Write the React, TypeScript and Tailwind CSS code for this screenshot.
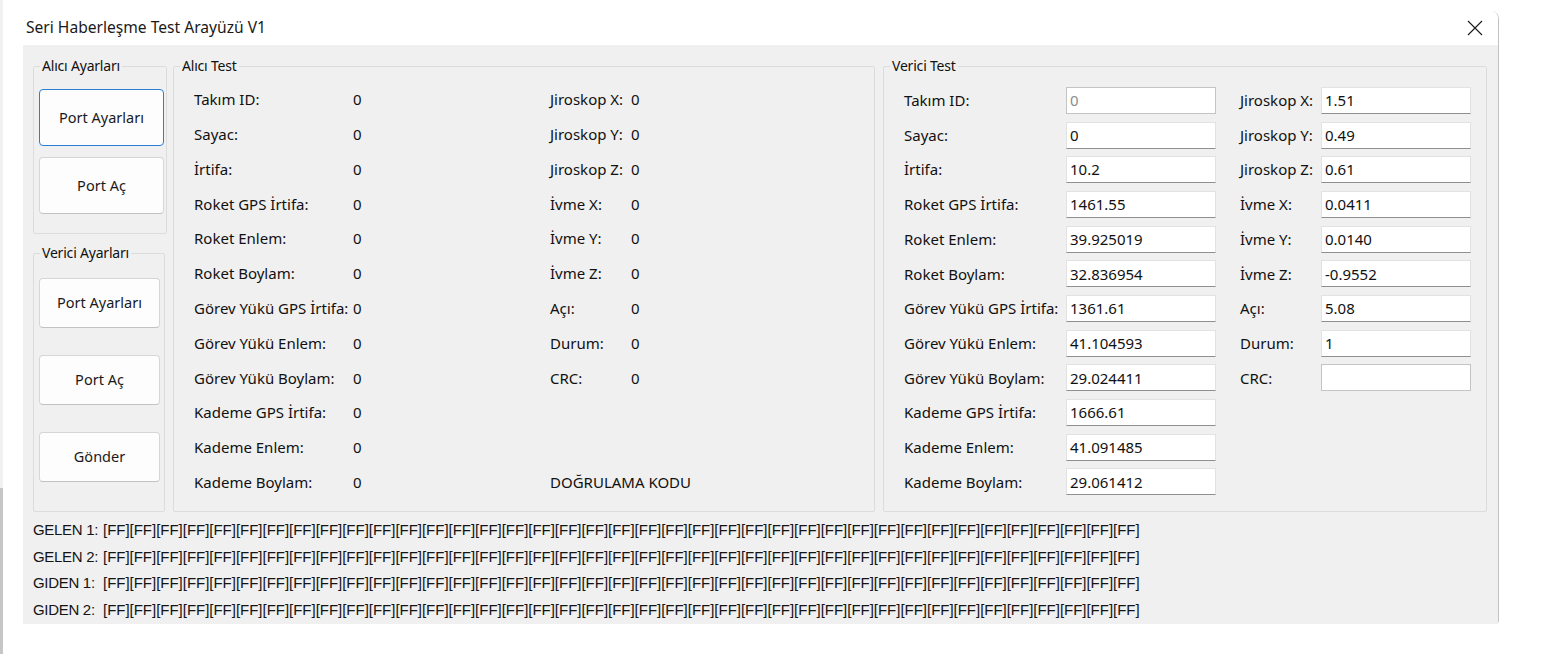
import type { ReactNode } from "react";

const ui = "font-['Noto_Sans','Liberation_Sans',sans-serif]";

const aliciLeft: [string, string][] = [
  ["Takım ID:", "0"],
  ["Sayac:", "0"],
  ["İrtifa:", "0"],
  ["Roket GPS İrtifa:", "0"],
  ["Roket Enlem:", "0"],
  ["Roket Boylam:", "0"],
  ["Görev Yükü GPS İrtifa:", "0"],
  ["Görev Yükü Enlem:", "0"],
  ["Görev Yükü Boylam:", "0"],
  ["Kademe GPS İrtifa:", "0"],
  ["Kademe Enlem:", "0"],
  ["Kademe Boylam:", "0"],
];

const aliciRight: [string, string][] = [
  ["Jiroskop X:", "0"],
  ["Jiroskop Y:", "0"],
  ["Jiroskop Z:", "0"],
  ["İvme X:", "0"],
  ["İvme Y:", "0"],
  ["İvme Z:", "0"],
  ["Açı:", "0"],
  ["Durum:", "0"],
  ["CRC:", "0"],
];

const vericiLeft: [string, string][] = [
  ["Takım ID:", "0"],
  ["Sayac:", "0"],
  ["İrtifa:", "10.2"],
  ["Roket GPS İrtifa:", "1461.55"],
  ["Roket Enlem:", "39.925019"],
  ["Roket Boylam:", "32.836954"],
  ["Görev Yükü GPS İrtifa:", "1361.61"],
  ["Görev Yükü Enlem:", "41.104593"],
  ["Görev Yükü Boylam:", "29.024411"],
  ["Kademe GPS İrtifa:", "1666.61"],
  ["Kademe Enlem:", "41.091485"],
  ["Kademe Boylam:", "29.061412"],
];

const vericiRight: [string, string][] = [
  ["Jiroskop X:", "1.51"],
  ["Jiroskop Y:", "0.49"],
  ["Jiroskop Z:", "0.61"],
  ["İvme X:", "0.0411"],
  ["İvme Y:", "0.0140"],
  ["İvme Z:", "-0.9552"],
  ["Açı:", "5.08"],
  ["Durum:", "1"],
  ["CRC:", ""],
];

const lines = ["GELEN 1:", "GELEN 2:", "GIDEN 1:", "GIDEN 2:"];
const packet = "[FF]".repeat(39);

function Group({
  title,
  className,
  children,
}: {
  title: string;
  className: string;
  children: ReactNode;
}) {
  return (
    <fieldset className={`border border-[#dcdcdc] rounded-[2px] ${className}`}>
      <legend className="ml-[6px] px-[2px] text-[14px] leading-[20px] tracking-[-0.2px] text-[#111]">
        {title}
      </legend>
      {children}
    </fieldset>
  );
}

function Button({
  label,
  focused,
  className,
}: {
  label: string;
  focused?: boolean;
  className: string;
}) {
  return (
    <button
      className={`flex items-center justify-center rounded-[4px] border bg-[#fdfdfd] text-[14.5px] text-[#1a1a1a] ${
        focused
          ? "border-[#2a7fd4]"
          : "border-[#d6d6d6] border-b-[#c2c2c2]"
      } ${className}`}
    >
      {label}
    </button>
  );
}

function Box({ value, disabled }: { value: string; disabled?: boolean }) {
  return (
    <div
      className={`h-[27px] w-[150px] bg-white px-[3px] flex items-center text-[15px] ${
        disabled
          ? "border border-[#c4c4c4] text-[#8c8c8c]"
          : "border border-[#e2e2e2] border-b-[#8f8f8f] text-[#111]"
      }`}
    >
      {value}
    </div>
  );
}

export default function App() {
  return (
    <div className={`flex w-[1548px] h-[654px] bg-white overflow-hidden ${ui}`}>
      <div className="flex flex-col w-[3px] h-full">
        <div className="h-[488px] bg-[#f1f1f1]" />
        <div className="flex-1 bg-[#c6c6c6]" />
      </div>

      <div className="ml-[20px] mt-[11px] w-[1476px] h-[613px] flex flex-col border-r border-[#c2c2c2] rounded-tr-[8px] rounded-br-[4px] overflow-hidden">
        {/* title bar */}
        <div className="h-[34px] bg-white flex items-center justify-between pl-[3px] pr-[15px]">
          <span className="text-[15.6px] text-[#1a1a1a]">
            Seri Haberleşme Test Arayüzü V1
          </span>
          <svg width="16" height="16" viewBox="0 0 16 16">
            <path d="M1 1L15 15M15 1L1 15" stroke="#1a1a1a" strokeWidth="1.1" />
          </svg>
        </div>

        {/* body */}
        <div className="flex-1 bg-[#f0f0f0] pt-[11px] pl-[10px] flex flex-col">
          <div className="flex">
            <div className="flex flex-col gap-[9px] w-[134px]">
              <Group title="Alıcı Ayarları" className="h-[178px] w-[134px]">
                <div className="flex flex-col gap-[11px] pl-[5px] pt-[13px]">
                  <Button label="Port Ayarları" focused className="w-[125px] h-[57px]" />
                  <Button label="Port Aç" className="w-[125px] h-[57px]" />
                </div>
              </Group>
              <Group title="Verici Ayarları" className="h-[269px] w-[132px]">
                <div className="flex flex-col gap-[27px] pl-[5px] pt-[15px]">
                  <Button label="Port Ayarları" className="w-[121px] h-[50px]" />
                  <Button label="Port Aç" className="w-[121px] h-[50px]" />
                  <Button label="Gönder" className="w-[121px] h-[50px]" />
                </div>
              </Group>
            </div>

            <Group title="Alıcı Test" className="ml-[6px] h-[456px] w-[702px]">
              <div className="flex pl-[20px] pt-[6px] text-[15px] text-[#111]">
                <div className="flex flex-col w-[356px]">
                  {aliciLeft.map(([k, v]) => (
                    <div key={k} className="h-[34.8px] flex items-center">
                      <span className="w-[159px]">{k}</span>
                      <span>{v}</span>
                    </div>
                  ))}
                </div>
                <div className="flex flex-col">
                  {aliciRight.map(([k, v]) => (
                    <div key={k} className="h-[34.8px] flex items-center">
                      <span className="w-[81px]">{k}</span>
                      <span>{v}</span>
                    </div>
                  ))}
                  <div className="h-[69.6px]" />
                  <div className="h-[34.8px] flex items-center">DOĞRULAMA KODU</div>
                </div>
              </div>
            </Group>

            <Group title="Verici Test" className="ml-[8px] h-[456px] w-[604px]">
              <div className="flex pl-[20px] pt-[7px] text-[15px] text-[#111]">
                <div className="flex flex-col">
                  {vericiLeft.map(([k, v], i) => (
                    <div key={k} className="h-[34.7px] flex items-center">
                      <span className="w-[162px]">{k}</span>
                      <Box value={v} disabled={i === 0} />
                    </div>
                  ))}
                </div>
                <div className="flex flex-col ml-[24px]">
                  {vericiRight.map(([k, v]) => (
                    <div key={k} className="h-[34.7px] flex items-center">
                      <span className="w-[81px]">{k}</span>
                      <Box value={v} disabled={k === "CRC:"} />
                    </div>
                  ))}
                </div>
              </div>
            </Group>
          </div>

          <div className="mt-[5px] flex flex-col font-['Liberation_Sans',Arial,sans-serif] text-[15px] text-[#141414]">
            {lines.map((l) => (
              <div key={l} className="h-[26.6px] flex items-center whitespace-nowrap">
                <span className="w-[70px] tracking-[-0.3px]">{l}</span>
                <span className="tracking-[-0.02px]">{packet}</span>
              </div>
            ))}
          </div>
        </div>
      </div>
    </div>
  );
}
